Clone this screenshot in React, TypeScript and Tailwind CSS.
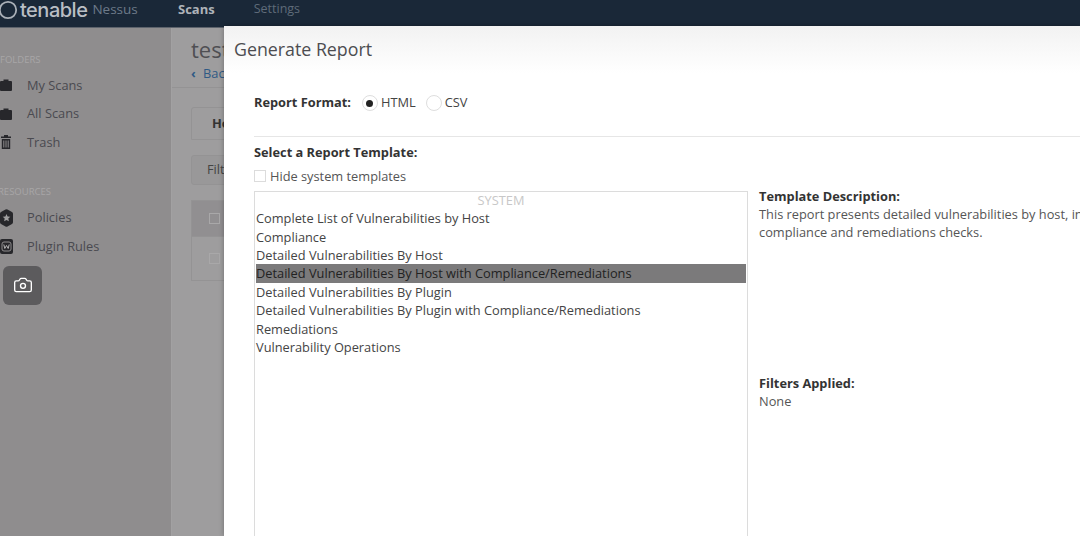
import React from "react";
import { Camera } from "lucide-react";

const font = "font-['Open_Sans','Noto_Sans',sans-serif]";

function NavItem({ icon, label }: { icon: React.ReactNode; label: string }) {
  return (
    <div className="flex h-[28.500px] items-center">
      <div className="flex w-[27px] shrink-0 items-center">{icon}</div>
      <span className="text-[12.800px] text-[#4a4a50]">{label}</span>
    </div>
  );
}

const Folder = () => (
  <svg width="12" height="12" viewBox="0 0 12 12"><path d="M1 2h2.500V.5h5V2H11a1 1 0 0 1 1 1v8a1 1 0 0 1-1 1H1a1 1 0 0 1-1-1V3a1 1 0 0 1 1-1z" fill="#27272b" /></svg>
);
const TrashI = () => (
  <svg width="10" height="14" viewBox="0 0 10 14" className="ml-[1px]"><path d="M3 1.500V0h4v1.500h3V3H0V1.500zM.8 4h8.400v10H.8zM2.300 5.500v7h1v-7zM4.500 5.500v7h1v-7zM6.700 5.500v7h1v-7z" fill="#27272b" fillRule="evenodd" /></svg>
);
const Shield = () => (
  <svg width="13" height="18" viewBox="0 0 13 18"><path d="M5.500.5a2 2 0 0 1 2 0l4.500 2.500a2 2 0 0 1 1 1.700v8.600a2 2 0 0 1-1 1.700l-4.500 2.500a2 2 0 0 1-2 0L1 15a2 2 0 0 1-1-1.700V4.700A2 2 0 0 1 1 3z" fill="#27272b" /><path d="M6.500 5l1.100 2.500 2.700.3-2 1.800.6 2.700-2.400-1.400-2.400 1.400.6-2.700-2-1.800 2.700-.3z" fill="#a09fa0" /></svg>
);
const Plugin = () => (
  <svg width="13" height="15" viewBox="0 0 13 15"><rect width="13" height="15" rx="2" fill="#27272b" /><rect x="2" y="3" width="9" height="9" rx="2" fill="none" stroke="#8f8d8e" /><path d="M3.800 5.500l1 4 1.700-3 1.700 3 1-4" fill="none" stroke="#b5b4b5" strokeWidth="1" /></svg>
);

const templates = [
  "Complete List of Vulnerabilities by Host",
  "Compliance",
  "Detailed Vulnerabilities By Host",
  "Detailed Vulnerabilities By Host with Compliance/Remediations",
  "Detailed Vulnerabilities By Plugin",
  "Detailed Vulnerabilities By Plugin with Compliance/Remediations",
  "Remediations",
  "Vulnerability Operations",
];

export default function App() {
  return (
    <div className={`relative h-[536px] w-[1080px] overflow-hidden bg-[#9e9d9e] ${font}`}>
      <header className="flex h-[28px] items-center border-b border-[#5d636c] bg-[#1a2838] pb-[8px]">
        <div className="ml-[-2px] flex w-[180px] shrink-0 items-center">
          <svg width="20" height="20" viewBox="0 0 20 20"><circle cx="10" cy="10" r="8.200" fill="none" stroke="#aab0b8" strokeWidth="1.800" /></svg>
          <span className="ml-[2px] font-['Inter',sans-serif] text-[20px] font-medium leading-none tracking-[-0.5px] text-[#b9bec4]">tenable</span>
          <span className="ml-[5px] text-[13.500px] text-[#6d7a89]">Nessus</span>
        </div>
        <span className="text-[13px] font-bold text-[#aeb3b9]">Scans</span>
        <span className="ml-[39px] text-[12.500px] text-[#5f6b79]">Settings</span>
      </header>
      <div className="flex h-[508px]">
        <aside className="w-[172px] shrink-0 overflow-hidden border-r border-[#a2a1a2] bg-[#8f8d8e] pt-[25px]">
          <div className="text-[9.500px] leading-[14px] text-[#a8a6a7]">FOLDERS</div>
          <div className="mt-[4px]">
            <NavItem icon={<Folder />} label="My Scans" />
            <NavItem icon={<Folder />} label="All Scans" />
            <NavItem icon={<TrashI />} label="Trash" />
          </div>
          <div className="ml-[-2px] mt-[28.500px] text-[9.500px] leading-[14px] text-[#a8a6a7]">RESOURCES</div>
          <div className="mt-[4.500px]">
            <NavItem icon={<Shield />} label="Policies" />
            <NavItem icon={<Plugin />} label="Plugin Rules" />
          </div>
          <div className="ml-[3px] mt-[5px] flex h-[39px] w-[39px] items-center justify-center rounded-[6px] bg-[#5c5b5d]">
            <Camera size={20} strokeWidth={1.600} className="text-white" />
          </div>
        </aside>
        <main className="flex-1">
          <div className="h-[60px] border-b border-[#949394] pl-[19px] pt-[6px]">
            <div className="text-[22px] leading-[30px] text-[#4f4f53]">test</div>
            <div className="flex text-[12.800px] leading-[18px] text-[#2f5a85]"><span className="w-[12px] font-bold">‹</span><span>Back</span></div>
          </div>
          <div className="ml-[19px] mt-[19px] flex h-[33px] w-[60px] items-center rounded-t-[3px] border border-[#949394] pl-[20px] text-[12.800px] font-bold text-[#333]">Hosts</div>
          <div className="ml-[19px] mt-[15px] flex h-[30px] w-[60px] items-center rounded-[3px] border border-[#949394] bg-[#999899] pl-[15px] text-[12.800px] text-[#444]">Filter</div>
          <div className="ml-[19px] mt-[15px] w-[60px] border border-[#949394]">
            <div className="flex h-[35px] items-center bg-[#918f91] pl-[17px]"><div className="h-[11px] w-[11px] border border-[#a9a8a9]" /></div>
            <div className="flex h-[44px] items-center border-t border-[#949394] pl-[17px]"><div className="h-[11px] w-[11px] border border-[#a9a8a9]" /></div>
          </div>
        </main>
      </div>

      <div className="absolute left-[224px] top-[26px] h-[510px] w-[856px] bg-white shadow-[0_0_5px_rgba(0,0,0,0.3)]">
        <div className="flex h-[47px] items-center bg-gradient-to-b from-[#f2f2f2] to-white pl-[10px] text-[17.800px] text-[#4c4c50]">Generate Report</div>
        <div className="pl-[30px]">
          <div className="flex h-[64px] items-center border-b border-[#e6e6e6] pb-[5px] pt-[2px] text-[12.800px] text-[#444]">
            <span className="font-bold text-[#333]">Report Format:</span>
            <span className="ml-[11px] flex h-[16px] w-[16px] items-center justify-center rounded-full border border-[#dedede]"><span className="h-[7px] w-[7px] rounded-full bg-[#222]" /></span>
            <span className="ml-[3px]">HTML</span>
            <span className="ml-[10px] h-[16px] w-[16px] rounded-full border border-[#dedede]" />
            <span className="ml-[3px]">CSV</span>
          </div>
          <div className="mt-[6px] text-[12.800px] font-bold leading-[18px] text-[#333]">Select a Report Template:</div>
          <div className="mt-[5.500px] flex items-center text-[12.800px] leading-[18px] text-[#555]">
            <span className="h-[12px] w-[12px] border border-[#dcdcdc]" />
            <span className="ml-[4px]">Hide system templates</span>
          </div>
          <div className="mt-[6.500px] flex">
            <div className="h-[360px] w-[494px] shrink-0 border border-[#dcdcdc] px-px text-[12.800px] text-[#444]">
              <div className="h-[17.200px] text-center leading-[16px] text-[#c8c8c8]">SYSTEM</div>
              {templates.map((t, i) => (
                <div key={t} className={`h-[18.400px] leading-[18.400px] ${i === 3 ? "bg-[#7b7a7b] text-[#222]" : ""}`}>{t}</div>
              ))}
            </div>
            <div className="ml-[11px] mt-[-4px] min-w-0 flex-1 whitespace-nowrap text-[12.800px] leading-[18px] text-[#555]">
              <div className="font-bold text-[#333]">Template Description:</div>
              <div>This report presents detailed vulnerabilities by host, including</div>
              <div>compliance and remediations checks.</div>
              <div className="mt-[133px] font-bold text-[#333]">Filters Applied:</div>
              <div>None</div>
            </div>
          </div>
        </div>
      </div>
    </div>
  );
}
